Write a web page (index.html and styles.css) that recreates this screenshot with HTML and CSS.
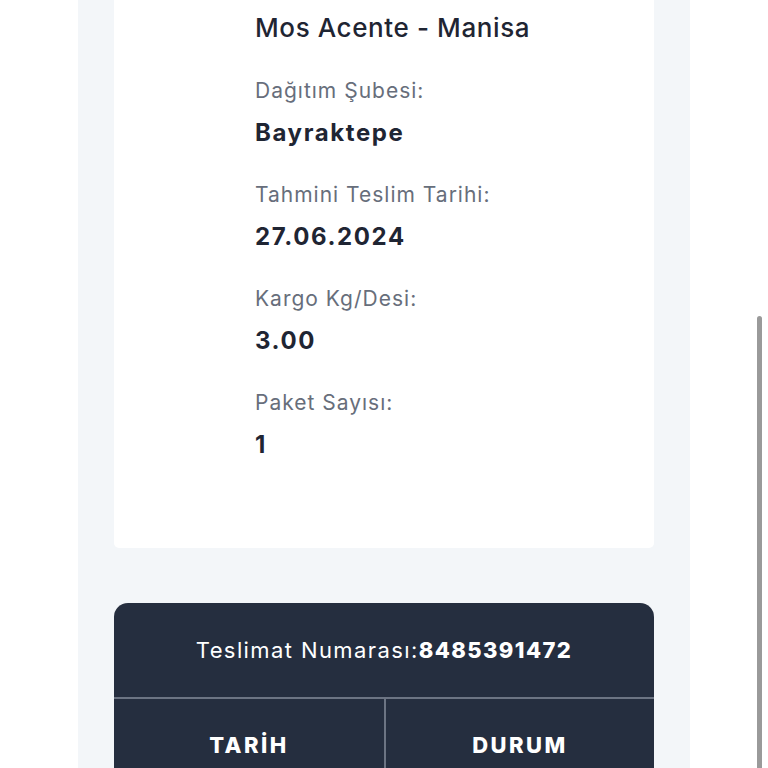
FILE: index.html
```html
<!DOCTYPE html>
<html lang="tr">
<head>
	<meta charset="utf-8">
	<meta name="viewport" content="width=device-width, initial-scale=1">
	<title>Kargo Takip</title>
	<link rel="stylesheet" href="styles.css">
</head>
<body>
	<div class="panel">
		<div class="card">
			<h2 class="title">Mos Acente - Manisa</h2>

			<div class="field">
				<p class="label">Dağıtım Şubesi:</p>
				<p class="value">Bayraktepe</p>
			</div>
			<div class="field">
				<p class="label">Tahmini Teslim Tarihi:</p>
				<p class="value">27.06.2024</p>
			</div>
			<div class="field">
				<p class="label">Kargo Kg/Desi:</p>
				<p class="value">3.00</p>
			</div>
			<div class="field">
				<p class="label">Paket Sayısı:</p>
				<p class="value">1</p>
			</div>
		</div>

		<!-- hareket tablosu -->
		<div class="moves">
			<div class="moves-head">Teslimat Numarası:<b>8485391472</b></div>
			<div class="moves-cols">
				<div class="col">TARİH</div>
				<div class="col">DURUM</div>
			</div>
		</div>
	</div>
	<div class="scrollbar"></div>
</body>
</html>
```

FILE: styles.css
```css
body{
	margin: 0;
	background-color: #ffffff;
	font-family: "Inter", "Noto Sans", sans-serif;
	color: #1f2533;
	overflow: hidden;
}
.panel{
	margin: 0 78px;
	padding: 0 36px 40px;
	background-color: #f3f6f9;
	min-height: 800px;
}
.card{
	background-color: #ffffff;
	border-radius: 0 0 5px 5px;
	padding: 10px 20px 86px 141px;
}
.title{
	margin: 0;
	font-size: 26px;
	line-height: 36px;
	font-weight: 500;
	letter-spacing: 0.6px;
}
.field{
	margin-top: 30px;
}
.field p{
	margin: 0;
}
.label{
	font-size: 21px;
	line-height: 30px;
	color: #676e7b;
	letter-spacing: 1px;
}
.value{
	margin-top: 10px !important;
	font-size: 24px;
	line-height: 34px;
	font-weight: 700;
	letter-spacing: 1.6px;
}
.moves{
	margin-top: 55px;
	background-color: #252e3f;
	border-radius: 14px 14px 0 0;
	color: #ffffff;
}
.moves-head{
	height: 94px;
	display: flex;
	align-items: center;
	justify-content: center;
	font-size: 22px;
	letter-spacing: 1.4px;
	border-bottom: 2px solid #6c7483;
}
.moves-head b{
	font-weight: 800;
}
.moves-cols{
	display: grid;
	grid-template-columns: 1fr 1fr;
}
.col{
	height: 92px;
	display: flex;
	align-items: center;
	justify-content: center;
	font-size: 22px;
	font-weight: 800;
	letter-spacing: 2.5px;
}
.col + .col{
	border-left: 2px solid #6c7483;
}
.scrollbar{
	position: fixed;
	right: 6px;
	top: 316px;
	bottom: 0;
	width: 5px;
	border-radius: 3px 3px 0 0;
	background-color: #9a9a9a;
}
```
